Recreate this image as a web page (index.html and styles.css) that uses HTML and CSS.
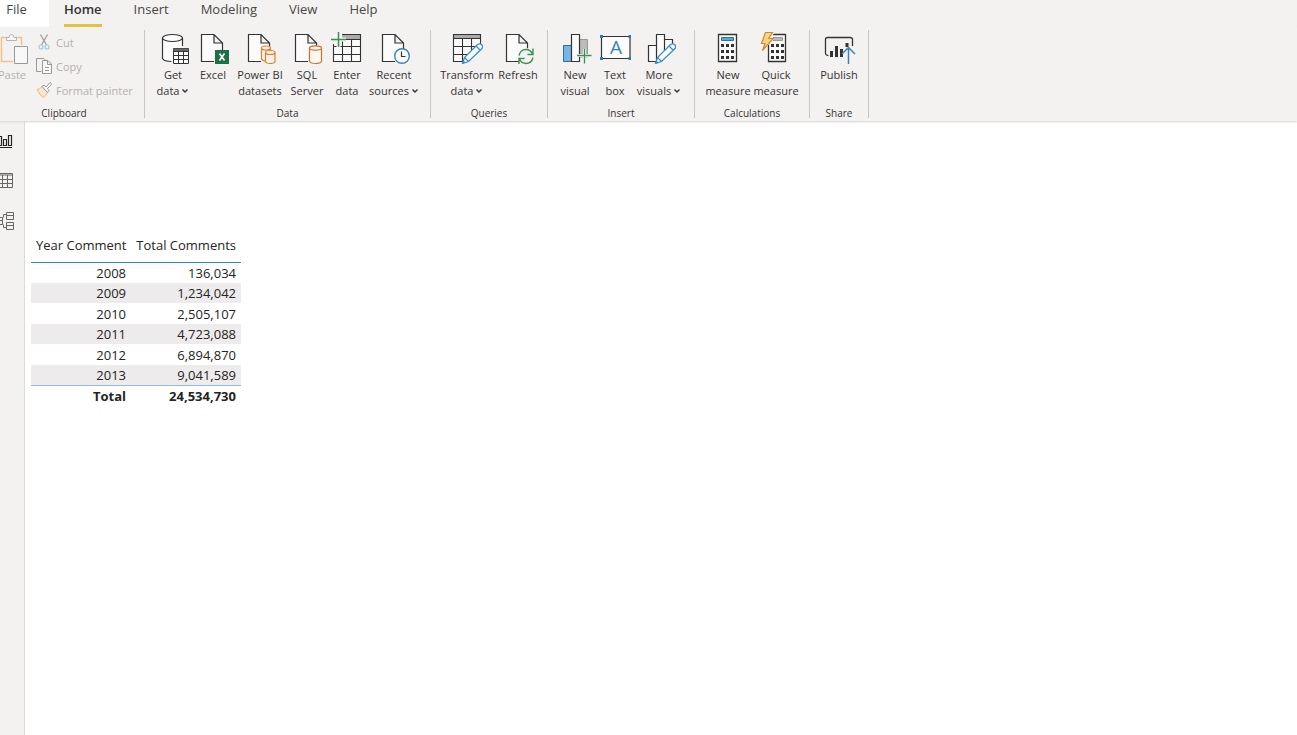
FILE: index.html
```html
<!DOCTYPE html>
<html lang="en">
<head>
  <meta charset="UTF-8">
  <meta name="viewport" content="width=device-width, initial-scale=1.0">
  <title>Report - Power BI Desktop</title>
  <link rel="stylesheet" href="styles.css">
</head>
<body>
  <!-- Shared icon shapes -->
  <svg class="defs" width="0" height="0" aria-hidden="true">
    <symbol id="page" viewBox="0 0 32 32">
      <path d="M5 3H16.500V11.500H25V16L17 20V29H5Z" fill="#fbfbfb"/>
      <path d="M17 29.500H4.500V2.500H17L25.500 11V18M17 2.500V11H25" fill="none" stroke="#333" stroke-width="1.200"/>
    </symbol>
    <symbol id="pencil" viewBox="0 0 32 32">
      <path d="M11.500 31.500L13.500 25.500L26.500 12.500Q29 11 31 13Q32.500 15 30.500 17L17.500 29.500Z" fill="#fbfbfb" stroke="#3b8dc9" stroke-width="1.300"/>
      <path d="M13.500 25.500L17.500 29.500M25 14L29 18" stroke="#3b8dc9" stroke-width="1.200"/>
      <path d="M11.500 31.500L12.500 28.500L14.500 30.500Z" fill="#3b8dc9"/>
    </symbol>
    <symbol id="chevron" viewBox="0 0 8 8">
      <path d="M1.500 2.500L4 5L6.500 2.500" fill="none" stroke="#333" stroke-width="1.400"/>
    </symbol>
  </svg>

  <div class="app">
    <nav class="tabs">
      <button class="tab tab-file">File</button>
      <button class="tab active">Home</button>
      <button class="tab">Insert</button>
      <button class="tab">Modeling</button>
      <button class="tab">View</button>
      <button class="tab">Help</button>
    </nav>

    <div class="ribbon">
      <div class="group">
        <div class="items items-clipboard">
          <button class="tool" disabled>
            <svg class="icon" viewBox="0 0 32 32">
              <path d="M11 5.500H5.500V29.500H17M20 5.500H25.500V13" fill="none" stroke="#efc28e" stroke-width="1.500"/>
              <path d="M10.500 8.500V5.500H13Q13 2.500 15.500 2.500Q18 2.500 18 5.500H20.500V8.500Z" fill="#f8f8f8" stroke="#b5b5b5"/>
              <path d="M18.500 14.500H31.500V31.500H18.500Z" fill="#f8f8f8" stroke="#999"/>
            </svg>
            <span>Paste</span>
          </button>
          <div class="small-tools">
            <button class="small-tool" disabled>
              <svg class="icon-small" viewBox="0 0 16 16">
                <path d="M4.500 0.500L10.500 11M11.500 0.500L5.500 11" fill="none" stroke="#999" stroke-width="1.200"/>
                <circle cx="5" cy="13" r="2" fill="none" stroke="#a5cbdc" stroke-width="1.200"/>
                <circle cx="11" cy="13" r="2" fill="none" stroke="#a5cbdc" stroke-width="1.200"/>
              </svg>
              Cut
            </button>
            <button class="small-tool" disabled>
              <svg class="icon-small" viewBox="0 0 16 16">
                <path d="M5.500 13.500H0.500V0.500H8L9.500 2" fill="none" stroke="#999"/>
                <path d="M6.500 2.500H12L15.500 6V15.500H6.500ZM11.500 2.500V6.500H15.500M9 9.500H13M9 12.500H13" fill="#f8f8f8" stroke="#999"/>
              </svg>
              Copy
            </button>
            <button class="small-tool" disabled>
              <svg class="icon-small" viewBox="0 0 16 16">
                <path d="M1 7.500Q4 7.500 6 4.500L11.500 10.500Q10 14 7.500 15.500Q4 14 1 7.500Z" fill="#fae5cd" stroke="#e9b988"/>
                <path d="M6 4.500L8 3L10 5L14 0.500Q15.500 1 15.500 2.500L11.500 6.500L13 8.500L11.500 10.500Z" fill="#f8f8f8" stroke="#999"/>
              </svg>
              Format painter
            </button>
          </div>
        </div>
        <div class="group-label">Clipboard</div>
      </div>

      <div class="group">
        <div class="items items-data">
          <button class="tool">
            <svg class="icon" viewBox="0 0 32 32">
              <path d="M5.500 6V26.500Q7 29.500 15.500 29.500V16H25.500V6" fill="#fbfbfb"/>
              <path d="M5.500 6V26.500Q7 29.500 14.500 29.500M25.500 6V14" fill="none" stroke="#333" stroke-width="1.200"/>
              <ellipse cx="15.500" cy="6" rx="10" ry="3.500" fill="#fbfbfb" stroke="#333" stroke-width="1.200"/>
              <path d="M16.500 16.500H31.500V31.500H16.500Z" fill="#fbfbfb" stroke="#333"/>
              <path d="M16.500 16.500H31.500V19.500H16.500Z" fill="#666"/>
              <path d="M16.500 19.500H31.500M16.500 23.500H31.500M16.500 27.500H31.500M21.500 19V31M26.500 19V31" stroke="#333"/>
            </svg>
            <span>Get<br>data<svg class="chevron"><use href="#chevron"/></svg></span>
          </button>
          <button class="tool">
            <svg class="icon" viewBox="0 0 32 32">
              <use href="#page"/>
              <path d="M18 18H32V32H18Z" fill="#1e7145"/>
              <path d="M22.500 21.500L27.500 28.500M27.500 21.500L22.500 28.500" stroke="#fff" stroke-width="1.600"/>
            </svg>
            <span>Excel</span>
          </button>
          <button class="tool tool-wide">
            <svg class="icon" viewBox="0 0 32 32">
              <use href="#page"/>
              <path d="M17.500 16.500V27Q18.500 29 22 29H26.500V16.500" fill="#fbf3ea" stroke="#d9802f" stroke-width="1.200"/>
              <ellipse cx="22" cy="16" rx="4.500" ry="2" fill="#fbf3ea" stroke="#d9802f" stroke-width="1.200"/>
              <path d="M21.500 21V30Q22.500 31.500 26 31.500Q30 31.500 31 30V21" fill="#fbf3ea" stroke="#d9802f" stroke-width="1.200"/>
              <ellipse cx="26.250" cy="20.500" rx="4.750" ry="2" fill="#fbf3ea" stroke="#d9802f" stroke-width="1.200"/>
            </svg>
            <span>Power BI<br>datasets</span>
          </button>
          <button class="tool">
            <svg class="icon" viewBox="0 0 32 32">
              <use href="#page"/>
              <path d="M18.500 16V29.500Q20 31.500 24.500 31.500Q29.500 31.500 30.500 29.500V16" fill="#fbf7f2" stroke="#d0712a" stroke-width="1.200"/>
              <ellipse cx="24.500" cy="16" rx="6" ry="2.200" fill="#fbf7f2" stroke="#d0712a" stroke-width="1.200"/>
            </svg>
            <span>SQL<br>Server</span>
          </button>
          <button class="tool">
            <svg class="icon" viewBox="0 0 32 32">
              <path d="M2.500 2.500H29.500V29.500H2.500Z" fill="#fbfbfb"/>
              <path d="M11 2.500H29.500V7H11Z" fill="#aaa"/>
              <path d="M11 2.500H29.500V29.500H2.500V12M10 7.500H29.500M2.500 14.500H29.500M2.500 22.500H29.500M11.500 8V29.500M20.500 7V29.500" fill="none" stroke="#333" stroke-width="1.100"/>
              <path d="M0 7.500H15M7.500 0V15" stroke="#f3f2f1" stroke-width="4"/>
              <path d="M0 7.500H15M7.500 0V15" stroke="#3d9352" stroke-width="1.500"/>
            </svg>
            <span>Enter<br>data</span>
          </button>
          <button class="tool tool-wide">
            <svg class="icon" viewBox="0 0 32 32">
              <use href="#page"/>
              <circle cx="24" cy="24" r="7.300" fill="#fbfbfb" stroke="#3b82b8" stroke-width="1.400"/>
              <path d="M23.500 19.500V24.500H27.500" fill="none" stroke="#333" stroke-width="1.200"/>
            </svg>
            <span>Recent<br>sources<svg class="chevron"><use href="#chevron"/></svg></span>
          </button>
        </div>
        <div class="group-label">Data</div>
      </div>

      <div class="group">
        <div class="items items-queries">
          <button class="tool tool-wide">
            <svg class="icon" viewBox="0 0 32 32">
              <path d="M2.500 2.500H29.500V29.500H2.500Z" fill="#fbfbfb"/>
              <path d="M2.500 2.500H29.500V6.500H2.500Z" fill="#aaa"/>
              <path d="M15 29.500H2.500V2.500H29.500V14M2.500 6.500H29.500M2.500 14.500H26M2.500 22.500H17M11.500 7V29.500M20.500 7V20" fill="none" stroke="#333" stroke-width="1.100"/>
              <path d="M18 32V28L31 17V32Z" fill="#f3f2f1"/>
              <use href="#pencil"/>
            </svg>
            <span>Transform<br>data<svg class="chevron"><use href="#chevron"/></svg></span>
          </button>
          <button class="tool tool-medium">
            <svg class="icon" viewBox="0 0 32 32">
              <use href="#page"/>
              <circle cx="24" cy="24.500" r="8.500" fill="#f3f2f1"/>
              <path d="M17 23.500Q18.500 17.500 24 17.500Q28.500 17.500 30.500 22M31 16.500V22.500H25.500M31 25.500Q29.500 31.500 24 31.500Q19.500 31.500 17.500 27M17 32V26.500H22.500" fill="none" stroke="#3d9352" stroke-width="1.400"/>
            </svg>
            <span>Refresh</span>
          </button>
        </div>
        <div class="group-label">Queries</div>
      </div>

      <div class="group">
        <div class="items items-insert">
          <button class="tool">
            <svg class="icon" viewBox="0 0 32 32">
              <path d="M4.500 13.500H12.500V29.500H4.500Z" fill="#76b5e6" stroke="#2f6f9f"/>
              <path d="M20.500 7.500H28.500V25H20.500Z" fill="#bbb" stroke="#999"/>
              <path d="M12.500 2.500H20.500V29.500H12.500Z" fill="#fbfbfb" stroke="#333" stroke-width="1.200"/>
              <path d="M18 23.500H32M25.500 17V31" stroke="#f3f2f1" stroke-width="3"/>
              <path d="M18 23.500H32.500M25.500 17V31.500" stroke="#3d9352" stroke-width="1.300"/>
            </svg>
            <span>New<br>visual</span>
          </button>
          <button class="tool">
            <svg class="icon" viewBox="0 0 32 32">
              <path d="M2.500 4.500H31V26.500H2.500Z" fill="#fbfbfb" stroke="#333" stroke-width="1.200"/>
              <path d="M1 3H4V6H1ZM29.500 3H32V6H29.500ZM1 25H4V28H1ZM29.500 25H32V28H29.500Z" fill="#38779f"/>
              <text x="17" y="22" text-anchor="middle" class="icon-letter">A</text>
            </svg>
            <span>Text<br>box</span>
          </button>
          <button class="tool tool-medium">
            <svg class="icon" viewBox="0 0 32 32">
              <path d="M5.500 13.500H13.500V29.500H5.500ZM21.500 7.500H29.500V29.500H21.500ZM13.500 2.500H21.500V29.500H13.500Z" fill="#fbfbfb" stroke="#333" stroke-width="1.200"/>
              <path d="M19 32V28L31 17V32Z" fill="#f3f2f1"/>
              <use href="#pencil" x="1"/>
            </svg>
            <span>More<br>visuals<svg class="chevron"><use href="#chevron"/></svg></span>
          </button>
        </div>
        <div class="group-label">Insert</div>
      </div>

      <div class="group">
        <div class="items items-calculations">
          <button class="tool tool-medium">
            <svg class="icon" viewBox="0 0 32 32">
              <path d="M6.500 2.500H24.500V29.500H6.500Z" fill="#fbfbfb" stroke="#333" stroke-width="1.300"/>
              <path d="M9.500 5.500H21.500V8.500H9.500Z" fill="#5ba7dc" stroke="#2d73a8"/>
              <path d="M9 13.500H22M9 19.500H22M9 25.500H22" stroke="#333" stroke-width="3" stroke-dasharray="3 2"/>
            </svg>
            <span>New<br>measure</span>
          </button>
          <button class="tool tool-medium">
            <svg class="icon" viewBox="0 0 32 32">
              <path d="M8.500 2.500H25.500V29.500H8.500Z" fill="#fbfbfb" stroke="#333" stroke-width="1.300"/>
              <path d="M13 5.500H22.500V8.500H13Z" fill="#bbb" stroke="#999"/>
              <path d="M11 13.500H24M11 19.500H24M11 25.500H24" stroke="#333" stroke-width="3" stroke-dasharray="3 2"/>
              <path d="M5 0H15L10 7H14L2 20H0V13L5 0Z" fill="#f3f2f1"/>
              <path d="M5.500 0.500H12.500L8.500 6.500H13L2.500 18.500L5 11.500H1.500Z" fill="#fbd48a" stroke="#d58a2c" stroke-width="1.200"/>
            </svg>
            <span>Quick<br>measure</span>
          </button>
        </div>
        <div class="group-label">Calculations</div>
      </div>

      <div class="group">
        <div class="items items-share">
          <button class="tool">
            <svg class="icon" viewBox="0 0 32 32">
              <path d="M5.500 23.500Q2.500 23.500 2.500 21V7.500Q2.500 5.500 5 5.500H27Q29.500 5.500 29.500 7.500V14" fill="none" stroke="#333" stroke-width="1.300"/>
              <path d="M8.500 19V25M13.500 14V25M18.500 17V25" stroke="#333" stroke-width="3"/>
              <path d="M24 11V15" stroke="#333" stroke-width="3"/>
              <path d="M25.500 32V16M19 22L25.500 15.500L32 22" fill="none" stroke="#3b82b8" stroke-width="1.500"/>
            </svg>
            <span>Publish</span>
          </button>
        </div>
        <div class="group-label">Share</div>
      </div>
    </div>

    <div class="workspace">
      <nav class="views">
        <button class="view" aria-label="Report view">
          <svg class="icon-view" viewBox="0 0 20 20">
            <path d="M4.500 5.500H7.500V14.500H4.500ZM9.500 8.500H12.500V14.500H9.500ZM14.500 4.500H17.500V14.500H14.500ZM0 16.500H18" fill="none" stroke="#252423" stroke-width="1.200"/>
          </svg>
        </button>
        <button class="view" aria-label="Data view">
          <svg class="icon-view" viewBox="0 0 20 20">
            <path d="M2.500 2.500H18.500V16.500H2.500ZM2.500 4H18.500M2.500 8.500H18.500M2.500 12.500H18.500M8.500 4V16.500M13.500 4V16.500" fill="none" stroke="#666"/>
          </svg>
        </button>
        <button class="view" aria-label="Model view">
          <svg class="icon-view" viewBox="0 0 20 20">
            <path d="M12.500 1.500H19.500V8.500H12.500ZM12.500 4.500H19.500M12.500 11.500H19.500V18.500H12.500ZM12.500 14.500H19.500M2.500 6.500H8.500V13.500H2.500ZM2.500 9.500H8.500M12 3.500H9.500V6.500M12 16.500H9.500V13.500" fill="none" stroke="#666"/>
          </svg>
        </button>
      </nav>

      <main class="canvas">
        <table class="data-table">
          <thead>
            <tr>
              <th>Year Comment</th>
              <th>Total Comments</th>
            </tr>
          </thead>
          <tbody>
            <tr><td>2008</td><td>136,034</td></tr>
            <tr><td>2009</td><td>1,234,042</td></tr>
            <tr><td>2010</td><td>2,505,107</td></tr>
            <tr><td>2011</td><td>4,723,088</td></tr>
            <tr><td>2012</td><td>6,894,870</td></tr>
            <tr><td>2013</td><td>9,041,589</td></tr>
          </tbody>
          <tfoot>
            <tr><td>Total</td><td>24,534,730</td></tr>
          </tfoot>
        </table>
      </main>
    </div>
  </div>
</body>
</html>
```
FILE: styles.css
```css
* {
  box-sizing: border-box;
}

body {
  margin: 0;
  font-family: "Open Sans", "Noto Sans", sans-serif;
  font-size: 11px;
  color: #333;
  background-color: #fff;
  overflow: hidden;
}

button {
  padding: 0;
  border: none;
  background: none;
  font: inherit;
  color: inherit;
  cursor: pointer;
}

button:disabled {
  color: #b3b1af;
  cursor: default;
}

.defs {
  position: absolute;
}

/* The window hangs slightly over the left edge */
.app {
  display: flex;
  flex-direction: column;
  min-height: 100vh;
  margin-left: -16px;
}

/* Tabs */
.tabs {
  display: flex;
  gap: 32px;
  height: 27px;
  background-color: #f3f2f1;
}

.tab {
  height: 27px;
  padding-bottom: 5px;
  border-bottom: 3px solid transparent;
  font-size: 13px;
  line-height: 19px;
  color: #484644;
}

.tab.active {
  font-weight: 600;
  color: #333;
  border-bottom-color: #e3c23c;
}

.tab-file {
  width: 65px;
  margin-right: -17px;
  background-color: #fff;
}

/* Ribbon */
.ribbon {
  display: flex;
  height: 94px;
  padding: 3px 0;
  background-color: #f3f2f1;
  box-shadow: 0 1px 2px #d6d4d2;
  z-index: 1;
}

.group {
  display: flex;
  flex-direction: column;
  justify-content: space-between;
  border-right: 1px solid #c8c6c4;
}

.items {
  display: flex;
  padding-top: 2px;
}

.items-clipboard {
  padding-left: 8px;
  padding-right: 10px;
  padding-top: 0;
}

.items-clipboard .tool {
  padding-top: 2px;
}

.items-data {
  padding-left: 8px;
  padding-right: 9px;
}

.items-queries {
  padding-left: 9px;
  padding-right: 5px;
}

.items-insert {
  padding-left: 7px;
  padding-right: 11px;
}

.items-calculations,
.items-share {
  padding-left: 9px;
  padding-right: 9px;
}

.group-label {
  font-size: 10px;
  line-height: 10px;
  text-align: center;
}

.tool {
  display: flex;
  flex-direction: column;
  align-items: center;
  gap: 3px;
  width: 40px;
  line-height: 16px;
  white-space: nowrap;
}

.tool-medium {
  width: 48px;
}

.tool-wide {
  width: 54px;
}

.icon {
  width: 32px;
  height: 32px;
  overflow: visible;
}

.icon-letter {
  font-size: 19px;
  fill: #3b82b8;
}

.icon-small {
  width: 16px;
  height: 16px;
}

.chevron {
  width: 8px;
  height: 8px;
  margin-left: 2px;
}

.small-tools {
  display: flex;
  flex-direction: column;
  width: 102px;
  padding-left: 4px;
}

.small-tool {
  display: flex;
  align-items: center;
  gap: 4px;
  height: 24px;
  white-space: nowrap;
}

/* Workspace */
.workspace {
  display: flex;
  flex: 1;
}

.views {
  display: flex;
  flex-direction: column;
  width: 41px;
  background-color: #f3f2f1;
  border-right: 1px solid #dddbd9;
}

.view {
  display: flex;
  align-items: center;
  justify-content: center;
  height: 40px;
}

.icon-view {
  width: 20px;
  height: 20px;
}

.canvas {
  flex: 1;
  padding: 107px 6px;
}

.data-table {
  width: 210px;
  table-layout: fixed;
  border-collapse: collapse;
  font-size: 13px;
  line-height: 18px;
  color: #252423;
}

.data-table th,
.data-table td {
  padding: 0 5px;
  text-align: right;
  white-space: nowrap;
}

.data-table th {
  height: 34px;
  font-weight: normal;
  border-bottom: 1px solid #2e86c1;
}

.data-table th:first-child {
  width: 100px;
}

.data-table td {
  height: 21px;
}

.data-table tbody tr:nth-child(even) td {
  height: 20px;
  background-color: #edebeb;
}

.data-table tfoot td {
  height: 22px;
  font-weight: bold;
  border-top: 1px solid #8fc1e8;
}
```
